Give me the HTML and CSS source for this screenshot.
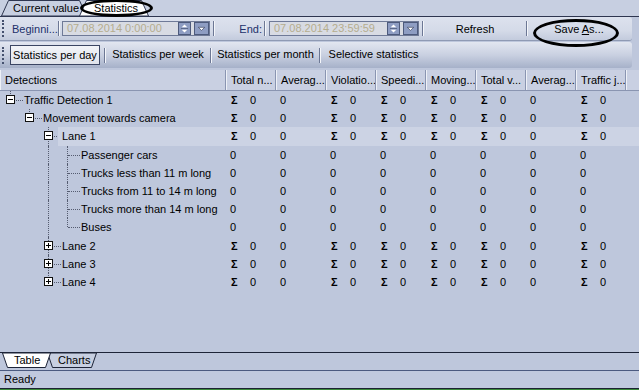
FILE: index.html
```html
<!DOCTYPE html>
<html lang="en">
<head>
  <meta charset="UTF-8" />
  <meta name="viewport" content="width=device-width, initial-scale=1.0"/>
  <title>Statistics</title>
  <link rel="stylesheet" href="styles.css">
</head>
<body>
<div class="app">
  <!-- document tabs -->
  <div class="doctabs">
    <div class="doctab">
      <svg width="86" height="16" viewBox="0 0 86 16"><polygon points="0.5,16 7.5,0.5 78.5,0.5 85.5,16"/></svg>
      <span class="tab-text first">Current value</span>
    </div>
    <div class="doctab active">
      <svg width="70" height="16" viewBox="0 0 70 16"><polygon points="0.5,16 7.5,0.5 62.5,0.5 69.5,16"/></svg>
      <span class="tab-text second">Statistics</span>
      <i class="mark mark-tab"></i>
    </div>
  </div>

  <!-- toolbars -->
  <div class="dock">
    <div class="toolbar tb1">
      <span class="grip"></span>
      <span class="lbl-begin">Beginni...</span>
      <span class="sep s1"></span>
      <div class="datebox first-box">
        <span class="date-text">07.08.2014 0:00:00</span>
        <span class="spin">
          <svg width="13" height="14" viewBox="0 0 13 14"><polygon points="6.5,2 10,5.5 3,5.5" fill="#fff"/><line x1="2" y1="7" x2="11" y2="7" stroke="#4d5a7c"/><polygon points="3,8.5 10,8.5 6.5,12" fill="#fff"/></svg>
        </span>
        <span class="drop">
          <svg width="15" height="14" viewBox="0 0 15 14"><polygon points="3.5,5.5 11.5,5.5 7.5,9.5" fill="#fff" stroke="#2d3550" stroke-width="0.8"/></svg>
        </span>
      </div>
      <span class="sep s2"></span>
      <span class="lbl-end">End:</span>
      <span class="sep s3"></span>
      <div class="datebox second-box">
        <span class="date-text">07.08.2014 23:59:59</span>
        <span class="spin">
          <svg width="13" height="14" viewBox="0 0 13 14"><polygon points="6.5,2 10,5.5 3,5.5" fill="#fff"/><line x1="2" y1="7" x2="11" y2="7" stroke="#4d5a7c"/><polygon points="3,8.5 10,8.5 6.5,12" fill="#fff"/></svg>
        </span>
        <span class="drop">
          <svg width="15" height="14" viewBox="0 0 15 14"><polygon points="3.5,5.5 11.5,5.5 7.5,9.5" fill="#fff" stroke="#2d3550" stroke-width="0.8"/></svg>
        </span>
      </div>
      <span class="sep s4"></span>
      <span class="tbtn refresh">Refresh</span>
      <span class="sep"></span>
      <span class="tbtn saveas">Save <u>A</u>s...<i class="mark mark-save"></i></span>
    </div>

    <div class="toolbar tb2">
      <span class="grip"></span>
      <span class="pbtn pressed">Statistics per day</span>
      <span class="sep s5"></span>
      <span class="pbtn week">Statistics per week</span>
      <span class="sep"></span>
      <span class="pbtn month">Statistics per month</span>
      <span class="sep"></span>
      <span class="pbtn sel-stat">Selective statistics</span>
    </div>
  </div>

  <!-- statistics table -->
  <div class="grid">
    <div class="row head">
      <div class="hc">Detections</div>
      <div class="hc">Total n...</div>
      <div class="hc">Averag...</div>
      <div class="hc">Violatio...</div>
      <div class="hc">Speedi...</div>
      <div class="hc">Moving...</div>
      <div class="hc">Total v...</div>
      <div class="hc">Averag...</div>
      <div class="hc">Traffic j...</div>
      <div class="hc rest"></div>
    </div>
    <div id="rows"></div>
  </div>

  <!-- bottom tabs -->
  <div class="btabs">
    <div class="btab active">
      <svg width="50" height="16" viewBox="0 0 50 16"><polygon points="0.5,0 48.5,0 43.5,14.5 5.5,14.5"/></svg>
      <span class="tab-text t-table">Table</span>
    </div>
    <div class="btab">
      <svg width="51" height="16" viewBox="0 0 51 16"><polygon points="0.5,0 49.5,0 44.5,14.5 5.5,14.5"/></svg>
      <span class="tab-text t-charts">Charts</span>
    </div>
  </div>

  <div class="status">Ready</div>
  <div class="edge"></div>
</div>

<script>
  // level, label, expander ('-', '+' or ''), guides for ancestors, has next sibling, leaf
  const nodes = [
    { level: 0, name: 'Traffic Detection 1', box: '-', guides: [], next: false },
    { level: 1, name: 'Movement towards camera', box: '-', guides: [0], next: false },
    { level: 2, name: 'Lane 1', box: '-', guides: [0, 0], next: true, sel: true },
    { level: 3, name: 'Passenger cars', box: '', guides: [0, 0, 1], next: true, leaf: true },
    { level: 3, name: 'Trucks less than 11 m long', box: '', guides: [0, 0, 1], next: true, leaf: true },
    { level: 3, name: 'Trucks from 11 to 14 m long', box: '', guides: [0, 0, 1], next: true, leaf: true },
    { level: 3, name: 'Trucks more than 14 m long', box: '', guides: [0, 0, 1], next: true, leaf: true },
    { level: 3, name: 'Buses', box: '', guides: [0, 0, 1], next: false, leaf: true },
    { level: 2, name: 'Lane 2', box: '+', guides: [0, 0], next: true },
    { level: 2, name: 'Lane 3', box: '+', guides: [0, 0], next: true },
    { level: 2, name: 'Lane 4', box: '+', guides: [0, 0], next: false }
  ];

  // which columns show a sum sign
  const sums = [true, false, true, true, true, true, false, true];

  const rows = document.getElementById('rows');

  nodes.forEach(node => {
    const row = document.createElement('div');
    row.className = 'row' + (node.sel ? ' sel' : '');

    let tree = '<div class="tree">';
    node.guides.forEach(g => {
      tree += `<span class="g${g ? ' line' : ''}"></span>`;
    });
    tree += `<span class="s${node.next ? ' more' : ''}">`;
    if (node.box) {
      tree += `<span class="box">${node.box === '+' ? '<i class="v"></i>' : ''}</span>`;
    }
    tree += `</span><span class="lbl">${node.name}</span></div>`;

    let cells = '';
    sums.forEach(sum => {
      if (sum && !node.leaf) {
        cells += '<div class="c"><b class="sigma">&Sigma;</b>0</div>';
      } else {
        cells += '<div class="c">0</div>';
      }
    });

    row.innerHTML = tree + cells + '<div class="c"></div>';
    rows.appendChild(row);
  });
</script>
</body>
</html>
```

FILE: styles.css
```css
body {
  margin: 0;
  font-family: "Liberation Sans", Arial, sans-serif;
  font-size: 11px;
  color: #000;
  background: #bec7dc;
}
.app {
  width: 639px;
  height: 390px;
  display: flex;
  flex-direction: column;
  overflow: hidden;
}

/* top tabs */
.doctabs {
  height: 16px;
  display: flex;
  padding-left: 1px;
  background: #c7cfe1;
  border-bottom: 1px solid #2e3650;
}
.doctab {
  display: grid;
  position: relative;
}
.doctab svg,
.doctab .tab-text,
.btab svg,
.btab .tab-text {
  grid-area: 1 / 1;
}
.doctab polygon {
  fill: #c7cfe1;
  stroke: #2e3650;
  stroke-width: 1;
}
.doctab.active {
  margin-left: -8px;
  z-index: 2;
}
.doctab.active polygon {
  fill: #fff;
}
.tab-text {
  line-height: 16px;
  white-space: nowrap;
}
.tab-text.first {
  padding-left: 12px;
}
.tab-text.second {
  padding-left: 15px;
}

/* annotation ellipses */
.mark {
  position: absolute;
  border: 3px solid #000;
  border-radius: 50%;
  box-sizing: border-box;
  pointer-events: none;
}
.mark-tab {
  left: 1px;
  top: -1px;
  width: 73px;
  height: 18px;
}
.mark-save {
  left: 5px;
  top: -4px;
  width: 86px;
  height: 28px;
}

/* toolbars */
.dock {
  padding-bottom: 2px;
  background: #bec7dc;
}
.toolbar {
  width: 632px;
  display: flex;
  align-items: center;
  border-radius: 0 3px 3px 0;
  box-sizing: border-box;
}
.tb1 {
  height: 24px;
  margin-bottom: 1px;
  background: linear-gradient(#dde2ee, #d4dae8 60%, #c3cbdd);
  border-bottom: 1px solid #8f9ab4;
}
.tb2 {
  height: 26px;
  background: linear-gradient(#e2e6f0, #c9d0e1 50%, #a6b1c9);
}
.grip {
  width: 0;
  height: 17px;
  margin-left: 2px;
  border-left: 2px dotted #44506e;
}
.sep {
  width: 1px;
  height: 15px;
  background: #6c7794;
  border-right: 1px solid #f4f6fa;
}
.lbl-begin {
  width: 45px;
  padding-left: 8px;
  color: #22306a;
  white-space: nowrap;
}
.s1 { margin-left: 1px; }
.datebox {
  display: flex;
  align-items: center;
  height: 15px;
  border: 1px solid #6f7a97;
  background: #d8dbe3;
  box-sizing: border-box;
}
.first-box {
  width: 148px;
  margin-left: 2px;
}
.second-box {
  width: 150px;
  margin-left: 3px;
}
.date-text {
  flex: 1;
  padding-left: 4px;
  color: #b5ad8e;
  white-space: nowrap;
  line-height: 13px;
}
.spin,
.drop {
  height: 13px;
  display: flex;
  background: #8e9dc3;
  border: 1px solid #4d5a7c;
  box-sizing: border-box;
}
.spin {
  width: 13px;
}
.drop {
  width: 15px;
  margin-left: 3px;
}
.spin svg,
.drop svg {
  display: block;
  width: 100%;
  height: 100%;
}
.s2 { margin-left: 3px; }
.lbl-end {
  width: 47px;
  text-align: right;
  color: #22306a;
}
.s3 { margin-left: 2px; }
.s4 { margin-left: 3px; }
.tbtn {
  width: 102px;
  text-align: center;
  position: relative;
}
.pbtn {
  height: 20px;
  line-height: 19px;
  text-align: center;
  white-space: nowrap;
  box-sizing: border-box;
}
.pbtn.pressed {
  width: 90px;
  margin-left: 6px;
  border: 1px solid #3a4563;
  background: linear-gradient(#f2f4f8, #dfe3ec);
}
.s5 { margin-left: 4px; }
.pbtn.week { width: 104px; }
.pbtn.month { width: 107px; }
.pbtn.sel-stat { width: 105px; }

/* table */
.grid {
  flex: 1;
  background: #bec7dc;
  border-bottom: 1px solid #1d2438;
}
.row {
  display: grid;
  grid-template-columns: 226px repeat(8, 50px) 1fr;
  height: 18.2px;
  align-items: stretch;
}
.row.head {
  height: 21px;
  background: #c9d0e2;
  border-bottom: 1px solid #8a95b1;
  box-sizing: border-box;
}
.hc {
  padding-left: 4px;
  line-height: 20px;
  border-left: 1px solid #eef1f7;
  border-right: 1px solid #8a95b1;
  white-space: nowrap;
  overflow: hidden;
}
.hc.rest {
  border-right: none;
}
.tree {
  display: flex;
  padding-left: 1px;
  white-space: nowrap;
}
.g,
.s {
  width: 19px;
  flex: none;
  position: relative;
}
.g.line::before {
  content: "";
  position: absolute;
  left: 9px;
  top: 0;
  bottom: 0;
  border-left: 1px dotted #555c70;
}
.s::before {
  content: "";
  position: absolute;
  left: 9px;
  top: 0;
  height: 50%;
  border-left: 1px dotted #555c70;
}
.s.more::before {
  height: 100%;
}
.s::after {
  content: "";
  position: absolute;
  left: 10px;
  top: 50%;
  width: 12px;
  border-top: 1px dotted #555c70;
}
.box {
  position: absolute;
  left: 5px;
  top: 4px;
  width: 9px;
  height: 9px;
  box-sizing: border-box;
  border: 1px solid #111;
  background: #fff;
  z-index: 1;
}
.box::before {
  content: "";
  position: absolute;
  left: 1px;
  top: 3px;
  width: 5px;
  height: 1px;
  background: #000;
}
.box .v {
  position: absolute;
  left: 3px;
  top: 1px;
  width: 1px;
  height: 5px;
  background: #000;
}
.lbl {
  flex: 1;
  padding-left: 4px;
  line-height: 18px;
  position: relative;
  z-index: 1;
}
.c {
  padding-left: 4px;
  line-height: 18px;
  white-space: nowrap;
}
.sel .lbl,
.sel .c {
  background: #ccd3e4;
}
.sigma {
  display: inline-block;
  width: 19px;
  margin-left: 1px;
  font-weight: bold;
}

/* bottom tabs */
.btabs {
  height: 17px;
  display: flex;
  padding-left: 2px;
  background: #bec7dc;
}
.btab {
  display: grid;
  height: 16px;
}
.btab polygon {
  fill: #c7cfe1;
  stroke: #1d2438;
  stroke-width: 1;
}
.btab.active {
  z-index: 2;
}
.btab.active polygon {
  fill: #fff;
}
.btab + .btab {
  margin-left: -5px;
}
.t-table {
  padding-left: 12px;
  line-height: 14px;
}
.t-charts {
  padding-left: 11px;
  line-height: 14px;
}

/* status bar */
.status {
  height: 17px;
  line-height: 17px;
  padding-left: 4px;
  background: #c0c9de;
  border-top: 1px solid #4b5a80;
  border-bottom: 1px solid #1c2233;
}
.edge {
  height: 1px;
  background: #3b8a3b;
}
```
